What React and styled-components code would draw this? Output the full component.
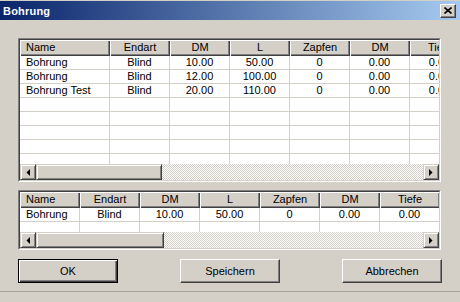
import React from "react";
import styled, { createGlobalStyle } from "styled-components";

const GlobalStyle = createGlobalStyle`
  html, body {
    margin: 0;
    padding: 0;
    background: #d4d0c8;
  }
  body {
    font-family: "Liberation Sans", Arial, sans-serif;
    font-size: 11px;
    color: #000;
  }
`;

const upperColumns = [
  { label: "Name", width: 90, align: "left" },
  { label: "Endart", width: 60 },
  { label: "DM", width: 60 },
  { label: "L", width: 60 },
  { label: "Zapfen", width: 60 },
  { label: "DM", width: 60 },
  { label: "Tiefe", width: 60 },
];

const lowerColumns = [
  { label: "Name", width: 60, align: "left" },
  { label: "Endart", width: 60 },
  { label: "DM", width: 60 },
  { label: "L", width: 60 },
  { label: "Zapfen", width: 60 },
  { label: "DM", width: 60 },
  { label: "Tiefe", width: 60 },
];

const upperRows = [
  ["Bohrung", "Blind", "10.00", "50.00", "0", "0.00", "0.00"],
  ["Bohrung", "Blind", "12.00", "100.00", "0", "0.00", "0.00"],
  ["Bohrung Test", "Blind", "20.00", "110.00", "0", "0.00", "0.00"],
];

const lowerRows = [["Bohrung", "Blind", "10.00", "50.00", "0", "0.00", "0.00"]];

const Window = styled.div`
  width: 460px;
  height: 302px;
  background: #d4d0c8;
  display: flex;
  flex-direction: column;
  overflow: hidden;
`;

const TitleBar = styled.div`
  margin-top: 1px;
  height: 19px;
  display: flex;
  align-items: center;
  justify-content: space-between;
  padding: 0 4px 0 3px;
  background: linear-gradient(to right, #0a246a, #a6caf0);
`;

const Title = styled.span`
  color: #fff;
  font-weight: bold;
  font-size: 11px;
  letter-spacing: 0.2px;
`;

const CloseButton = styled.div`
  box-sizing: border-box;
  width: 16px;
  height: 14px;
  background: #d4d0c8;
  border: 1px solid;
  border-color: #fff #404040 #404040 #fff;
  box-shadow: inset -1px -1px #808080;
  display: flex;
  align-items: center;
  justify-content: center;
`;

const Content = styled.div`
  display: flex;
  flex-direction: column;
  padding: 18px 19px 0 18px;
  gap: 8px;
`;

const SunkenOuter = styled.div`
  border: 1px solid;
  border-color: #808080 #fff #fff #808080;
`;

const SunkenInner = styled.div`
  height: ${(p) => p.$height}px;
  border: 1px solid;
  border-color: #404040 #d4d0c8 #d4d0c8 #404040;
  background: #fff;
  display: flex;
  flex-direction: column;
  overflow: hidden;
`;

const Grid = styled.div`
  flex: 1;
  overflow: hidden;
  min-height: 0;
`;

const Row = styled.div`
  display: flex;
  width: max-content;
`;

const HeaderCell = styled.div`
  box-sizing: border-box;
  flex: none;
  width: ${(p) => p.$width}px;
  height: 16px;
  line-height: 15px;
  padding: 0 6px;
  text-align: ${(p) => p.$align || "center"};
  background: #d4d0c8;
  box-shadow: inset 1px 1px #fff, inset -1px -1px #404040, inset -2px -2px #808080;
  white-space: nowrap;
  overflow: hidden;
`;

const Cell = styled.div`
  box-sizing: border-box;
  flex: none;
  width: ${(p) => p.$width}px;
  height: 14px;
  line-height: 13px;
  padding: 0 6px;
  text-align: ${(p) => p.$align || "center"};
  border-right: 1px solid #d4d0c8;
  border-bottom: 1px solid #d4d0c8;
  white-space: nowrap;
  overflow: hidden;
`;

const ScrollBar = styled.div`
  flex: none;
  height: 16px;
  display: flex;
`;

const Raised = styled.div`
  box-sizing: border-box;
  flex: none;
  height: 16px;
  background: #d4d0c8;
  border: 1px solid;
  border-color: #d4d0c8 #404040 #404040 #d4d0c8;
  box-shadow: inset 1px 1px #fff, inset -1px -1px #808080;
`;

const ArrowButton = styled(Raised)`
  width: 16px;
  display: flex;
  align-items: center;
  justify-content: center;
`;

const Thumb = styled(Raised)`
  width: ${(p) => p.$width}px;
`;

const Track = styled.div`
  flex: 1;
  background-image: repeating-conic-gradient(#fff 0 25%, #d4d0c8 0 50%);
  background-size: 2px 2px;
`;

const ButtonRow = styled.div`
  display: flex;
  justify-content: space-between;
  padding: 9px 18px 0 18px;
`;

const Button = styled.div`
  box-sizing: border-box;
  width: 100px;
  height: 24px;
  background: #d4d0c8;
  border: 1px solid;
  border-color: ${(p) =>
    p.$default ? "#000" : "#fff #404040 #404040 #fff"};
  box-shadow: ${(p) =>
    p.$default
      ? "inset 1px 1px #fff, inset -1px -1px #404040, inset -2px -2px #808080"
      : "inset -1px -1px #808080"};
  display: flex;
  align-items: center;
  justify-content: center;
  font-size: 11px;
`;

const BottomEdge = styled.div`
  margin-top: 8px;
  flex: 1;
  border-top: 1px solid #a8a49c;
  background: #d4d0c8;
`;

const Arrow = ({ dir }) => (
  <svg width="4" height="7" viewBox="0 0 4 7">
    {dir === "left" ? (
      <polygon points="4,0 4,7 0.5,3.5" fill="#000" />
    ) : (
      <polygon points="0,0 0,7 3.5,3.5" fill="#000" />
    )}
  </svg>
);

const ListView = ({ columns, rows, fillerRows, height, thumb }) => {
  const empty = columns.map(() => "");
  const allRows = [...rows, ...Array.from({ length: fillerRows }, () => empty)];
  return (
    <SunkenOuter>
      <SunkenInner $height={height}>
        <Grid>
          <Row>
            {columns.map((c, i) => (
              <HeaderCell key={i} $width={c.width} $align={c.align}>
                {c.label}
              </HeaderCell>
            ))}
          </Row>
          {allRows.map((r, ri) => (
            <Row key={ri}>
              {r.map((v, ci) => (
                <Cell key={ci} $width={columns[ci].width} $align={columns[ci].align}>
                  {v}
                </Cell>
              ))}
            </Row>
          ))}
        </Grid>
        <ScrollBar>
          <ArrowButton>
            <Arrow dir="left" />
          </ArrowButton>
          <Thumb $width={thumb} />
          <Track />
          <ArrowButton>
            <Arrow dir="right" />
          </ArrowButton>
        </ScrollBar>
      </SunkenInner>
    </SunkenOuter>
  );
};

export default function App() {
  return (
    <Window>
      <GlobalStyle />
      <TitleBar>
        <Title>Bohrung</Title>
        <CloseButton>
          <svg width="8" height="7" viewBox="0 0 8 7">
            <path d="M0.5 0.5 L7.5 6.5 M7.5 0.5 L0.5 6.5" stroke="#000" strokeWidth="1.6" />
          </svg>
        </CloseButton>
      </TitleBar>
      <Content>
        <ListView columns={upperColumns} rows={upperRows} fillerRows={6} height={140} thumb={126} />
        <ListView columns={lowerColumns} rows={lowerRows} fillerRows={1} height={56} thumb={128} />
      </Content>
      <ButtonRow>
        <Button $default>OK</Button>
        <Button>Speichern</Button>
        <Button>Abbrechen</Button>
      </ButtonRow>
      <BottomEdge />
    </Window>
  );
}
